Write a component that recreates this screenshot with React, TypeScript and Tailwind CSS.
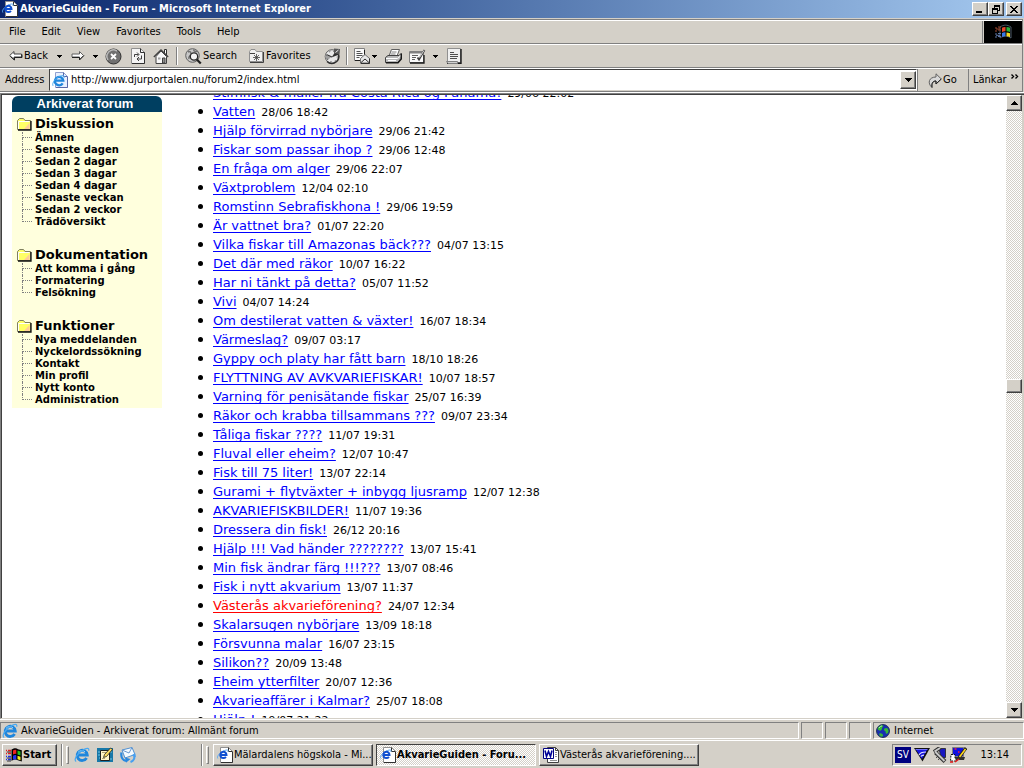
import React, { useState } from "react";

const TAHOMA = "font-['DejaVu_Sans_Condensed','DejaVu_Sans',sans-serif]";
const RAISED =
  "border border-t-white border-l-white border-r-[#404040] border-b-[#404040] shadow-[inset_-1px_-1px_0_#808080]";
const SUNKEN = "border border-t-[#808080] border-l-[#808080] border-r-white border-b-white";
const DITHER =
  "bg-[#ffffff] bg-[repeating-conic-gradient(#d4d0c8_0_25%,#ffffff_0_50%)] bg-[length:2px_2px]";

type IconProps = { className?: string };

function PageIcon({ className = "size-4" }: IconProps) {
  return (
    <svg viewBox="0 0 16 16" className={className} aria-hidden="true">
      <path d="M3.5.5h8l4 4v11h-12z" fill="#fff" stroke="#909090" />
      <path d="M11.5.5v4h4M15.5 5v10.5H4" fill="none" stroke="#303030" />
      <path d="M.8 11.500C-.5 9.500 2.500 6 6 4.200s6-1.600 4.800.6" fill="none" stroke="#5aa8f0" strokeWidth="1" />
      <path d="M8.900 9.800a3.100 3.100 0 1 1 .6-1.900H3.200" fill="none" stroke="#1050d0" strokeWidth="2" />
    </svg>
  );
}

function ExplorerIcon({ className = "size-4" }: IconProps) {
  return (
    <svg viewBox="0 0 16 16" className={className} aria-hidden="true">
      <path d="M12.6 11a5.1 5.1 0 1 1 .7-3H4" fill="none" stroke="#1f86dc" strokeWidth="2.8" />
      <path d="M4 5.4a5 5 0 0 1 7-.6" fill="none" stroke="#8fd4ff" strokeWidth="1" />
      <path d="M2.2 14.6C-.6 13 3 6.400 8.600 3.200c4-2.500 7-2.400 6 .6" fill="none" stroke="#48a8f0" strokeWidth="1.2" />
    </svg>
  );
}

function AddressIcon() {
  return (
    <svg viewBox="0 0 16 16" className="size-4" aria-hidden="true">
      <path d="M3.500.5h8l4 4v11h-12z" fill="#e8f0ff" stroke="#90a0d0" />
      <path d="M11.500.5v4h4M15.500 5v10.500H4" fill="none" stroke="#5868a8" />
      <path d="M10.700 11.300a4.200 4.200 0 1 1 .6-2.600H3.500" fill="none" stroke="#1f86dc" strokeWidth="2.300" />
      <path d="M1 13.800C-.5 11 4 5.500 8 4.200s5 0 4 1.600" fill="none" stroke="#48a8f0" />
    </svg>
  );
}

function BackArrow() {
  return (
    <svg viewBox="0 0 14 12" className="h-3 w-3.5" aria-hidden="true">
      <path d="M.7 5.500 5 1.500v2.500h7.500v3H5v2.500z" fill="#fff" stroke="#404040" />
      <path d="M1.500 6.500 5.500 10V7.500h7.500V4.500" fill="none" stroke="#202020" />
    </svg>
  );
}

function ForwardArrow() {
  return (
    <svg viewBox="0 0 14 12" className="h-3 w-3.5" aria-hidden="true">
      <path d="M12.500 5.500 8.500 1.500v2.500H1v3h7.500v2.500z" fill="#fff" stroke="#606060" />
      <path d="M1 7.500h7.500V10l4.500-4.500" fill="none" stroke="#202020" />
    </svg>
  );
}

function Caret() {
  return (
    <svg viewBox="0 0 5 3" className="h-[3px] w-[5px]" shapeRendering="crispEdges" aria-hidden="true">
      <path d="M0 0h5v1H4v1H3v1H2V2H1V1H0z" fill="#000" />
    </svg>
  );
}

function StopIcon() {
  return (
    <svg viewBox="0 0 17 17" className="size-[17px]" aria-hidden="true">
      <circle cx="8.500" cy="8.500" r="7.500" fill="#707070" stroke="#303030" />
      <path d="M3 12A6.500 6.500 0 0 1 12 3" fill="none" stroke="#b8b8b8" strokeWidth="1.500" />
      <path d="m6 6 5 5m0-5-5 5" stroke="#fff" strokeWidth="1.800" />
    </svg>
  );
}

function RefreshIcon() {
  return (
    <svg viewBox="0 0 14 16" className="h-4 w-3.5" aria-hidden="true">
      <path d="M.5.5h9l4 4v11H.5z" fill="#f4f4f4" stroke="#909090" />
      <path d="M9.500.5v4h4v11H1" fill="none" stroke="#303030" />
      <path d="M3.500 9V6.500h4M6 4.500l2 2-2 2M10.500 7.500V11h-4M8 9l-2 2 2 2" fill="none" stroke="#404040" />
    </svg>
  );
}

function HomeIcon() {
  return (
    <svg viewBox="0 0 16 16" className="size-4" aria-hidden="true">
      <path d="M11.500 5V1.500h2V7" fill="#fff" stroke="#303030" />
      <path d="M3 8.500v7h10.500v-7L8 3z" fill="#f8f8f8" stroke="#404040" />
      <path d="M.8 9 8 1.800 15.200 9" fill="none" stroke="#404040" strokeWidth="1.300" />
      <path d="M9.500 15v-5h2.500v5z" fill="#909090" stroke="#404040" />
      <path d="M5 9.500h2.500v2H5z" fill="#a0a0a0" />
    </svg>
  );
}

function SearchIcon() {
  return (
    <svg viewBox="0 0 17 17" className="size-[17px]" aria-hidden="true">
      <circle cx="7.500" cy="7.500" r="6.800" fill="#c8c8c8" stroke="#606060" />
      <path d="M3 4c2-1 3 0 3 2s-3 2-2 5M9 1.500c-1 2 2 2 4 2" fill="none" stroke="#707070" strokeWidth="1.500" />
      <circle cx="9" cy="8.500" r="3.700" fill="#f4f4f4" stroke="#282828" strokeWidth="1.300" />
      <path d="m11.800 11.500 4 4" stroke="#202020" strokeWidth="2.200" />
    </svg>
  );
}

function FavoritesIcon() {
  return (
    <svg viewBox="0 0 15 14" className="h-3.5 w-[15px]" aria-hidden="true">
      <path d="M.5 12.500v-10l1.500-2h4l1.500 2h6v10z" fill="#f0f0f0" stroke="#909090" />
      <path d="M1 13.500h13.500V3M1 4.500h5" fill="none" stroke="#404040" />
      <path d="M7.500 5v7M4 8.500h7M5 6l5 5m0-5-5 5" stroke="#404040" strokeWidth=".8" />
    </svg>
  );
}

function HistoryIcon() {
  return (
    <svg viewBox="0 0 17 17" className="size-[17px]" aria-hidden="true">
      <circle cx="8" cy="8.500" r="6.800" fill="#e8e8e8" stroke="#606060" />
      <path d="M3 13.500a7 7 0 0 0 11.500-7" fill="none" stroke="#303030" strokeWidth="1.500" />
      <path d="M2 5.500 8 8.500 3 12.500A6.500 6.500 0 0 1 2 5.500z" fill="#a0a0a0" />
      <circle cx="8" cy="8.500" r="5.300" fill="none" stroke="#404040" strokeDasharray="1 3.300" />
      <path d="m7.500 9.500 4-6 3.500 3z" fill="#303030" />
      <path d="M10 5V.5L16 1l-.5 5.500z" fill="#585858" />
      <path d="m11.500 4.500 3-2.500" stroke="#f0f0f0" />
      <path d="m3.500 7 4.500 2" stroke="#303030" />
    </svg>
  );
}

function MailIcon() {
  return (
    <svg viewBox="0 0 17 16" className="h-4 w-[17px]" aria-hidden="true">
      <path d="M.5.5h10v12H.5z" fill="#fafafa" stroke="#808080" />
      <path d="M10.500 2v6M1 12.500h6" stroke="#202020" />
      <path d="M2.500 3.500h4m-4 2h6m-6 2h6m-6 2h3" stroke="#505050" />
      <path d="M6.500 10.500 11 6.500l4.500 4v4.500h-9z" fill="#e8e8e8" stroke="#707070" />
      <path d="m6.500 15 4.500-4 4.500 4M15.500 10.500V15.500H7" fill="none" stroke="#303030" />
    </svg>
  );
}

function PrintIcon() {
  return (
    <svg viewBox="0 0 17 15" className="h-[15px] w-[17px]" aria-hidden="true">
      <path d="m4 7 2.500-6.500h8L12 7z" fill="#fff" stroke="#606060" />
      <path d="M6.500 3h5m-6 2h5" stroke="#808080" />
      <path d="M.5 8.500 3 6.500h11l2-2v5l-3 4H.5z" fill="#b8b8b8" stroke="#404040" />
      <path d="M1 9.500h11.500L15.500 7M3 11.500h8" fill="none" stroke="#fff" />
      <path d="M1 13.800h12l3.500-4V4.500" fill="none" stroke="#181818" strokeWidth="1.500" />
    </svg>
  );
}

function EditIcon() {
  return (
    <svg viewBox="0 0 17 15" className="h-[15px] w-[17px]" aria-hidden="true">
      <path d="M.5 2.500h14v11H.5z" fill="#fafafa" stroke="#808080" />
      <path d="M1 3.500h13.500" stroke="#808080" strokeWidth="2" />
      <path d="M1 14h14V6" fill="none" stroke="#181818" strokeWidth="1.300" />
      <path d="M3 6.500h6m-6 2h4m-4 2h3" stroke="#606060" />
      <path d="m8.500 8.500 1.500 2L15.500 1" fill="none" stroke="#404040" strokeWidth="1.800" />
      <path d="m10.500 8.500 4.500-7" stroke="#e8e8e8" strokeWidth=".9" />
    </svg>
  );
}

function DiscussIcon() {
  return (
    <svg viewBox="0 0 16 16" className="size-4" aria-hidden="true">
      <path d="M1.500.5h13v14H1.500z" fill="#f0f0f0" stroke="#909090" />
      <path d="M15 1v14.200H1" fill="none" stroke="#181818" strokeWidth="1.400" />
      <path d="M.5 13.500h11v2H2z" fill="#d0d0d0" stroke="#808080" />
      <path d="M4 4.500h4m-4 2h8m-8 2h8m-8 2h7" stroke="#505050" />
    </svg>
  );
}

function GoIcon() {
  return (
    <svg viewBox="0 0 14 15" className="h-[15px] w-3.5" aria-hidden="true">
      <path d="M4 14.500C-1 10 1 4 8 4V.8L13.300 6 8 11V8C4.500 8 3.500 10.500 4 14.500z" fill="#d8d8d8" stroke="#606060" />
      <path d="M13.300 6 8 11V8C4.500 8 3.500 10.500 4 14.500" fill="none" stroke="#202020" />
    </svg>
  );
}

function ThrobberFlag() {
  return (
    <svg viewBox="0 0 18 16" className="h-4 w-[18px]" aria-hidden="true">
      <path d="M6 3c4-2.500 7-2.500 11 0v11c-4-2.500-7-2.500-11 0z" fill="#000" stroke="#607080" strokeWidth=".8" />
      <path d="M8 3.800c1-.8 2.500-1 3.500-.9v4.300c-1.200-.1-2.500.1-3.500.7z" fill="#e84828" />
      <path d="M12.500 3c1.300 0 2.500.3 3.500.8v4.100c-1-.4-2.200-.6-3.500-.6z" fill="#28b038" />
      <path d="M8 9c1-.6 2.400-.8 3.500-.7v4c-1.200-.1-2.500.1-3.500.8z" fill="#3878e8" />
      <path d="M12.500 8.400c1.300 0 2.500.3 3.500.8v4c-1-.5-2.200-.8-3.500-.9z" fill="#f8d820" />
      <path d="M1 4h2m1-1h3M1 7h2m1-1h3M2 5h4" stroke="#a04830" />
      <path d="M1 10h2m1-.5h3M1 13h2m1-.5h3m-5-1.200h4" stroke="#6078a8" />
    </svg>
  );
}

function StartFlag() {
  return (
    <svg viewBox="0 0 16 14" className="h-3.5 w-4" aria-hidden="true">
      <path d="M5.500 1.500C8.500-.3 10.500-.2 12 1.200l3.800 1V13.500l-4-1.300c-2-1.200-4-1-6.300.8z" fill="#000" />
      <path d="M7 2.500c1.200-.8 2.200-.9 3.300-.5v4C9.200 5.700 8 5.900 7 6.500z" fill="#f02020" />
      <path d="m11.500 2.500 3 1v4l-3-1z" fill="#20c020" />
      <path d="M7 7.800c1.200-.7 2.200-.9 3.300-.5v4c-1.100-.3-2.300-.1-3.300.5z" fill="#2030f0" />
      <path d="m11.500 7.800 3 1v3.500l-3-1z" fill="#f8f020" />
      <path d="M0 2.500h1m1 0h3M0 5.500h1m1 0h3" stroke="#e02020" strokeWidth="1.600" />
      <path d="M0 8.500h1m1 0h3m-5 3h1m1 0h3" stroke="#2030e0" strokeWidth="1.600" />
      <path d="M1 4h4M1 10h4M1 13h4" stroke="#101010" strokeWidth=".8" />
    </svg>
  );
}

function FolderIcon() {
  return (
    <svg viewBox="0 0 15 13" className="h-[13px] w-[15px]" aria-hidden="true">
      <path d="M.5 11.500v-9l2-2h4l1.500 2h5.500v9z" fill="#ffff66" stroke="#808060" />
      <path d="M7 11 12.500 5v6z" fill="#ffcc99" />
      <path d="M1.500 11V3.500h11" fill="none" stroke="#fff" />
      <path d="M1 12h13V3" fill="none" stroke="#101010" strokeWidth="1.300" />
    </svg>
  );
}

function GlobeIcon() {
  return (
    <svg viewBox="0 0 14 14" className="size-3.5" aria-hidden="true">
      <circle cx="7" cy="7" r="6.500" fill="#1830b0" stroke="#102040" strokeWidth=".8" />
      <path d="M1.500 5C2.500 2 6 .8 7 1.500c1 1-1 1.500-1 3S4.500 7 3.500 6.500 2 6 1.500 5zM8.500 4.500c2-1.500 4 0 4 2.500s-2 3-2.500 2.500 0-2-1-2.500-1.500-1.500-.5-2.500zM3.500 9.500c1.500-.5 3.500.5 3.500 2s-2 1.500-3 .5-1-2-.5-2.500z" fill="#38b838" />
      <path d="M3 4c1-1.500 2-2 3-2" stroke="#b8f8b0" fill="none" />
    </svg>
  );
}

function DesktopIcon() {
  return (
    <svg viewBox="0 0 16 16" className="size-4" aria-hidden="true">
      <path d="M0 1h16v14H0z" fill="#1878a8" />
      <path d="M1 5h3M1 8h2m-1 3h2m8 1h3M13 5h2" stroke="#70c8e8" />
      <path d="M3.500 3.500h9v10h-9z" fill="#fff4c8" stroke="#202020" />
      <path d="M5 5.500h4m-4 6h3" stroke="#b0a070" />
      <path d="m6.500 10.500 1-3L13.500 1l2 1.500-6 7z" fill="#f8d860" stroke="#202020" strokeWidth=".8" />
    </svg>
  );
}

function OutlookIcon() {
  return (
    <svg viewBox="0 0 16 16" className="size-4" aria-hidden="true">
      <path d="m2 3 10-2.500 3 7L5 11z" fill="#f4faff" stroke="#5090d0" />
      <path d="m2 3 7 3 3-5.500" fill="none" stroke="#6898d0" />
      <path d="M1.500 5.500c-.8 4.500 1 7.500 4.500 8.500" fill="none" stroke="#2888e0" strokeWidth="2.200" />
      <path d="m5 10.500 5.500 1.500L6 15.800z" fill="#2888e0" />
      <path d="M14 8c1 3-.5 6-3.500 7" fill="none" stroke="#48a0f0" strokeWidth="2.200" />
      <path d="m11.500 8.500 3.500-2.500 1 4z" fill="#48a0f0" />
    </svg>
  );
}

function WordIcon() {
  return (
    <svg viewBox="0 0 16 16" className="size-4" aria-hidden="true">
      <path d="M4.500.5h8l3 3v12h-11z" fill="#fff" stroke="#404040" />
      <path d="M12.500.5v3h3" fill="none" stroke="#404040" />
      <path d="M12 5.500h2m-2 2h2m-2 2h2m-7 4h7" stroke="#909090" />
      <path d="M.5 1.500h10v10H.5z" fill="#fff" stroke="#000080" />
      <path d="m2 3.500 1.500 6L5.500 4.500l2 5L9 3.500" fill="none" stroke="#000098" strokeWidth="1.600" />
    </svg>
  );
}

function TrayShield() {
  return (
    <svg viewBox="0 0 16 14" className="h-3.5 w-4" aria-hidden="true">
      <path d="M0 0h16L8.500 13.500z" fill="#101010" />
      <path d="M1.500 1h12L8 11z" fill="#1818e0" />
      <path d="M1.500 1.500h12" stroke="#7070ff" />
      <path d="M5 7c1-2.500 3-3 7-3M7 8.500c.5-1 1.500-1.300 3-1.300" fill="none" stroke="#e0e0ff" strokeWidth="1.200" />
    </svg>
  );
}

function TrayTools() {
  return (
    <svg viewBox="0 0 14 16" className="h-4 w-3.5" aria-hidden="true">
      <path d="M6 1.500h6.500v9H8z" fill="#1818c0" stroke="#202020" strokeWidth=".8" />
      <path d="M1 5 7 .8M2.500 5.500l9.500 9" stroke="#303030" strokeWidth="4" />
      <path d="M1.500 4.500 7 1M2.500 5l9 9" stroke="#c8c8c8" strokeWidth="2" />
      <path d="M3 10.500h1m1 2h1m-3-4h1" stroke="#505050" />
    </svg>
  );
}

function TrayDisplay() {
  return (
    <svg viewBox="0 0 17 17" className="size-[17px]" aria-hidden="true">
      <path d="M2.500 1.500h11v9h-11z" fill="#1010e0" stroke="#808080" />
      <path d="M5 14h9l1-3H5z" fill="#303030" />
      <path d="M4.500 3h2M8 6h1.500" stroke="#f02040" strokeWidth="1.500" />
      <path d="m9 11.500 7-9.500" stroke="#202020" strokeWidth="3" />
      <path d="m9.500 11 6-8" stroke="#ffd820" strokeWidth="1.500" />
      <path d="M1 8.500h4V12l2 3H.5z" fill="#fff" stroke="#101010" strokeDasharray="2 1" />
      <path d="m5 16 4-3M0 16h3" stroke="#e01818" strokeWidth="1.500" />
    </svg>
  );
}

type Topic = { title: string; time: string; active?: boolean };

const topics: Topic[] = [
  { title: "Stimfisk & maller fra Costa Rica og Panama!", time: "29/06 22:02" },
  { title: "Vatten", time: "28/06 18:42" },
  { title: "Hjälp förvirrad nybörjare", time: "29/06 21:42" },
  { title: "Fiskar som passar ihop ?", time: "29/06 12:48" },
  { title: "En fråga om alger", time: "29/06 22:07" },
  { title: "Växtproblem", time: "12/04 02:10" },
  { title: "Romstinn Sebrafiskhona !", time: "29/06 19:59" },
  { title: "Är vattnet bra?", time: "01/07 22:20" },
  { title: "Vilka fiskar till Amazonas bäck???", time: "04/07 13:15" },
  { title: "Det där med räkor", time: "10/07 16:22" },
  { title: "Har ni tänkt på detta?", time: "05/07 11:52" },
  { title: "Vivi", time: "04/07 14:24" },
  { title: "Om destilerat vatten & växter!", time: "16/07 18:34" },
  { title: "Värmeslag?", time: "09/07 03:17" },
  { title: "Gyppy och platy har fått barn", time: "18/10 18:26" },
  { title: "FLYTTNING AV AVKVARIEFISKAR!", time: "10/07 18:57" },
  { title: "Varning för penisätande fiskar", time: "25/07 16:39" },
  { title: "Räkor och krabba tillsammans ???", time: "09/07 23:34" },
  { title: "Tåliga fiskar ????", time: "11/07 19:31" },
  { title: "Fluval eller eheim?", time: "12/07 10:47" },
  { title: "Fisk till 75 liter!", time: "13/07 22:14" },
  { title: "Gurami + flytväxter + inbygg ljusramp", time: "12/07 12:38" },
  { title: "AKVARIEFISKBILDER!", time: "11/07 19:36" },
  { title: "Dressera din fisk!", time: "26/12 20:16" },
  { title: "Hjälp !!! Vad händer ????????", time: "13/07 15:41" },
  { title: "Min fisk ändrar färg !!!???", time: "13/07 08:46" },
  { title: "Fisk i nytt akvarium", time: "13/07 11:37" },
  { title: "Västerås akvarieförening?", time: "24/07 12:34", active: true },
  { title: "Skalarsugen nybörjare", time: "13/09 18:18" },
  { title: "Försvunna malar", time: "16/07 23:15" },
  { title: "Silikon??", time: "20/09 13:48" },
  { title: "Eheim ytterfilter", time: "20/07 12:36" },
  { title: "Akvarieaffärer i Kalmar?", time: "25/07 18:08" },
  { title: "Hjälp !", time: "19/07 21:22" },
];

const sections = [
  {
    heading: "Diskussion",
    links: ["Ämnen", "Senaste dagen", "Sedan 2 dagar", "Sedan 3 dagar", "Sedan 4 dagar", "Senaste veckan", "Sedan 2 veckor", "Trädöversikt"],
  },
  { heading: "Dokumentation", links: ["Att komma i gång", "Formatering", "Felsökning"] },
  {
    heading: "Funktioner",
    links: ["Nya meddelanden", "Nyckelordssökning", "Kontakt", "Min profil", "Nytt konto", "Administration"],
  },
];

function TitleBar() {
  return (
    <header className="flex h-[18px] shrink-0 items-center bg-linear-to-r from-[#0a246a] to-[#a6caf0] pr-0.5 pl-0.5 text-white">
      <PageIcon />
      <h1 className="ml-0.5 flex-1 text-[11px] leading-4 font-bold">AkvarieGuiden - Forum - Microsoft Internet Explorer</h1>
      <button aria-label="Minimize" className={`flex h-3.5 w-4 items-end justify-center bg-[#d4d0c8] ${RAISED}`}>
        <span className="mr-0.5 mb-0.5 h-0.5 w-1.5 bg-black" />
      </button>
      <button aria-label="Restore" className={`flex h-3.5 w-4 items-center justify-center bg-[#d4d0c8] ${RAISED}`}>
        <svg viewBox="0 0 8 9" className="h-[9px] w-2" shapeRendering="crispEdges" aria-hidden="true">
          <path d="M2 0h6v6H6V5h1V2H3v1H2zM0 3h6v6H0zM1 5v3h4V5z" fillRule="evenodd" fill="#000" />
        </svg>
      </button>
      <button aria-label="Close" className={`ml-0.5 flex h-3.5 w-4 items-center justify-center bg-[#d4d0c8] ${RAISED}`}>
        <svg viewBox="0 0 8 7" className="h-[7px] w-2" shapeRendering="crispEdges" aria-hidden="true">
          <path d="M0 0h2v1h1v1h2V1h1V0h2v1H7v1H6v1H5v1h1v1h1v1h1v1H6V6H5V5H3v1H2v1H0V6h1V5h1V4h1V3H2V2H1V1H0z" fill="#000" />
        </svg>
      </button>
    </header>
  );
}

function MenuBar() {
  return (
    <div className="flex h-6 border-t border-b border-t-white border-b-[#808080]">
      <nav aria-label="Menu" className="flex flex-1 items-center gap-4 border-r border-[#808080] pl-[9px]">
        {["File", "Edit", "View", "Favorites", "Tools", "Help"].map((item) => (
          <button key={item}>{item}</button>
        ))}
      </nav>
      <div className="ml-px flex w-[38px] items-center justify-center bg-black">
        <ThrobberFlag />
      </div>
    </div>
  );
}

function ToolBar() {
  return (
    <div className="flex h-6 items-center border-t border-b border-t-white border-b-[#808080] pl-[9px]">
      <button className="flex w-12 items-center gap-px"><BackArrow />Back</button>
      <button aria-label="Back history" className="w-3"><Caret /></button>
      <button aria-label="Forward" className="ml-0.5 w-[22px]"><ForwardArrow /></button>
      <button aria-label="Forward history" className="w-3"><Caret /></button>
      <button aria-label="Stop" className="w-6"><StopIcon /></button>
      <button aria-label="Refresh" className="ml-0.5 w-[22px]"><RefreshIcon /></button>
      <button aria-label="Home" className="w-[23px]"><HomeIcon /></button>
      <span className="h-[18px] w-0.5 border-l border-l-[#808080] bg-white" />
      <button className="ml-[7px] flex w-16 items-center gap-px"><SearchIcon />Search</button>
      <button className="flex w-[75px] items-center gap-0.5"><FavoritesIcon />Favorites</button>
      <button aria-label="History" className="w-[22px]"><HistoryIcon /></button>
      <span className="h-[18px] w-0.5 border-l border-l-[#808080] bg-white" />
      <button aria-label="Mail" className="ml-1.5 w-[18px]"><MailIcon /></button>
      <button aria-label="Mail options" className="w-[13px]"><Caret /></button>
      <button aria-label="Print" className="w-6"><PrintIcon /></button>
      <button aria-label="Edit" className="w-6"><EditIcon /></button>
      <button aria-label="Edit options" className="w-[13px]"><Caret /></button>
      <button aria-label="Discuss"><DiscussIcon /></button>
    </div>
  );
}

function AddressBar() {
  const [url, setUrl] = useState("http://www.djurportalen.nu/forum2/index.html");
  return (
    <div className="flex h-6 items-stretch border-t border-b border-t-white border-b-[#808080]">
      <label htmlFor="address" className="flex w-[49px] shrink-0 items-center pl-[5px]">Address</label>
      <div className="flex min-w-0 flex-1 items-center border border-t-[#404040] border-r-white border-b-[#d4d0c8] border-l-[#404040] bg-white pl-0.5">
        <AddressIcon />
        <input id="address" value={url} onChange={(e) => setUrl(e.target.value)} className="ml-[3px] min-w-0 flex-1 bg-transparent outline-none" />
        <button aria-label="Show addresses" className={`flex h-[18px] w-4 items-center justify-center bg-[#d4d0c8] ${RAISED}`}>
          <svg viewBox="0 0 7 4" className="h-1 w-[7px]" shapeRendering="crispEdges" aria-hidden="true">
            <path d="M0 0h7v1H6v1H5v1H4v1H3V3H2V2H1V1H0z" />
          </svg>
        </button>
      </div>
      <button className="flex w-[51px] items-center gap-px border-l border-[#808080] pl-2.5"><GoIcon />Go</button>
      <button className="flex w-[54px] items-center border-l border-[#808080] pl-1">
        Länkar
        <svg viewBox="0 0 8 5" className="mb-[7px] ml-1 h-[5px] w-2" aria-hidden="true">
          <path d="m.5.5 2 2-2 2m4-4 2 2-2 2" fill="none" stroke="#000" strokeWidth="1.400" />
        </svg>
      </button>
    </div>
  );
}

function Sidebar() {
  return (
    <aside className="mt-px w-[150px] shrink-0 self-start font-['DejaVu_Sans',sans-serif] text-black">
      <h2 className="h-4 rounded-t-md bg-[#003f61] pr-1 text-center font-['Liberation_Sans',sans-serif] text-[13px] leading-4 font-bold text-white">
        Arkiverat forum
      </h2>
      <div className="flex flex-col gap-[19px] bg-[#ffffdd] pt-1 pb-0.5 pl-[5px]">
        {sections.map((section) => (
          <section key={section.heading}>
            <h3 className="flex h-4 items-center gap-[3px] text-[13px] leading-4 font-bold"><FolderIcon />{section.heading}</h3>
            <ul className="ml-[5px]">
              {section.links.map((link) => (
                <li key={link} className="group flex h-3">
                  <span className="flex w-[13px] flex-col pr-[3px]">
                    <span className="h-1.5 border-b border-l border-dotted border-[#808080]" />
                    <span className="h-1.5 border-l border-dotted border-[#808080] group-last:border-transparent" />
                  </span>
                  <a href="#" className="text-[10px] leading-3 font-bold whitespace-nowrap">{link}</a>
                </li>
              ))}
            </ul>
          </section>
        ))}
      </div>
    </aside>
  );
}

function TopicList() {
  return (
    <ul className="-mt-3 ml-9 min-w-0 flex-1 font-['DejaVu_Sans',sans-serif] text-black">
      {topics.map((topic) => (
        <li key={topic.title} className="flex h-[19px] items-baseline whitespace-nowrap">
          <span className="mr-2.5 size-[5px] shrink-0 self-center rounded-full bg-black" />
          <a
            href="#"
            className={
              topic.active
                ? "text-[13px] leading-[19px] text-[#ff0000] underline decoration-1 underline-offset-2 [text-decoration-skip-ink:none]"
                : "text-[13px] leading-[19px] text-[#0000ff] underline decoration-1 underline-offset-2 [text-decoration-skip-ink:none]"
            }
          >
            {topic.title}
          </a>
          <span className="ml-1.5 text-[11px]">{topic.time}</span>
        </li>
      ))}
    </ul>
  );
}

function ScrollBar() {
  return (
    <div className={`flex w-4 shrink-0 flex-col ${DITHER}`}>
      <button aria-label="Scroll up" className={`flex h-4 items-center justify-center bg-[#d4d0c8] ${RAISED}`}>
        <svg viewBox="0 0 7 4" className="h-1 w-[7px]" shapeRendering="crispEdges" aria-hidden="true">
          <path d="M3 0h1v1h1v1h1v1h1v1H0V3h1V2h1V1h1z" />
        </svg>
      </button>
      <div className="flex-[268]" />
      <button aria-label="Scroll position" className={`h-3.5 bg-[#d4d0c8] ${RAISED}`} />
      <div className="flex-[309]" />
      <button aria-label="Scroll down" className={`flex h-4 items-center justify-center bg-[#d4d0c8] ${RAISED}`}>
        <svg viewBox="0 0 7 4" className="h-1 w-[7px]" shapeRendering="crispEdges" aria-hidden="true">
          <path d="M0 0h7v1H6v1H5v1H4v1H3V3H2V2H1V1H0z" />
        </svg>
      </button>
    </div>
  );
}

function StatusBar() {
  return (
    <div className="flex h-5 shrink-0 gap-0.5 pt-0.5 pb-px">
      <div className={`flex flex-1 items-center gap-[3px] pl-px ${SUNKEN}`}><ExplorerIcon />AkvarieGuiden - Arkiverat forum: Allmänt forum</div>
      <div className={`w-[22px] ${SUNKEN}`} />
      <div className={`w-[22px] ${SUNKEN}`} />
      <div className={`w-[22px] ${SUNKEN}`} />
      <div className={`flex w-[151px] items-center gap-1 pl-0.5 ${SUNKEN}`}><GlobeIcon />Internet</div>
    </div>
  );
}

function Grip() {
  return (
    <span className="flex gap-[3px]">
      <span className="h-[22px] w-0.5 border-l border-[#808080] bg-white" />
      <span className="h-[18px] w-[3px] self-center border border-t-white border-r-[#808080] border-b-[#808080] border-l-white" />
    </span>
  );
}

function TaskBar() {
  return (
    <footer className="flex h-7 shrink-0 items-center border-t border-white bg-[#d4d0c8] px-0.5">
      <button className={`flex h-[22px] w-[55px] items-center gap-px pl-[3px] font-bold ${RAISED}`}>
        <StartFlag />Start
      </button>
      <div className="ml-1 flex"><Grip /></div>
      <div className="ml-[5px] flex flex-1 items-center gap-[7px]">
        <button aria-label="Internet Explorer"><ExplorerIcon /></button>
        <button aria-label="Show desktop"><DesktopIcon /></button>
        <button aria-label="Outlook Express"><OutlookIcon /></button>
      </div>
      <Grip />
      <nav aria-label="Open windows" className="ml-1 flex gap-[3px]">
        <button className={`flex h-[22px] w-[160px] items-center gap-px pl-[3px] whitespace-nowrap ${RAISED}`}><PageIcon />Mälardalens högskola - Mi...</button>
        <button className={`flex h-[22px] w-[160px] items-center gap-px border border-t-[#404040] border-r-white border-b-white border-l-[#404040] pl-[3px] font-bold whitespace-nowrap ${DITHER}`}><PageIcon />AkvarieGuiden - Foru...</button>
        <button className={`flex h-[22px] w-[160px] items-center gap-px pl-[3px] whitespace-nowrap ${RAISED}`}><WordIcon />Västerås akvarieförening....</button>
      </nav>
      <div className={`ml-[193px] flex h-[22px] w-[130px] items-center gap-[3px] pl-0.5 ${SUNKEN}`}>
        <span className="flex size-4 items-center justify-center bg-[#000080] text-[10px] text-white">SV</span>
        <TrayShield />
        <TrayTools />
        <TrayDisplay />
        <time className="ml-auto pr-3">13:14</time>
      </div>
    </footer>
  );
}

export default function App() {
  return (
    <div className={`flex h-screen flex-col overflow-hidden bg-[#d4d0c8] text-[11px] leading-[14px] text-black ${TAHOMA}`}>
      <TitleBar />
      <div className="mt-px mr-px shrink-0 border-t border-r border-[#808080]">
        <MenuBar />
        <ToolBar />
        <AddressBar />
      </div>
      <div className="flex min-h-0 flex-1 flex-col border-t border-b border-white">
        <div className="flex min-h-0 flex-1 border-t border-b border-l border-t-[#808080] border-b-[#d4d0c8] border-l-[#808080]">
          <main className="flex min-w-0 flex-1 overflow-hidden border-t border-l border-[#404040] bg-white pl-2.5">
            <Sidebar />
            <TopicList />
          </main>
          <div className="flex border-t border-[#404040] pr-0.5"><ScrollBar /></div>
        </div>
      </div>
      <StatusBar />
      <TaskBar />
    </div>
  );
}
